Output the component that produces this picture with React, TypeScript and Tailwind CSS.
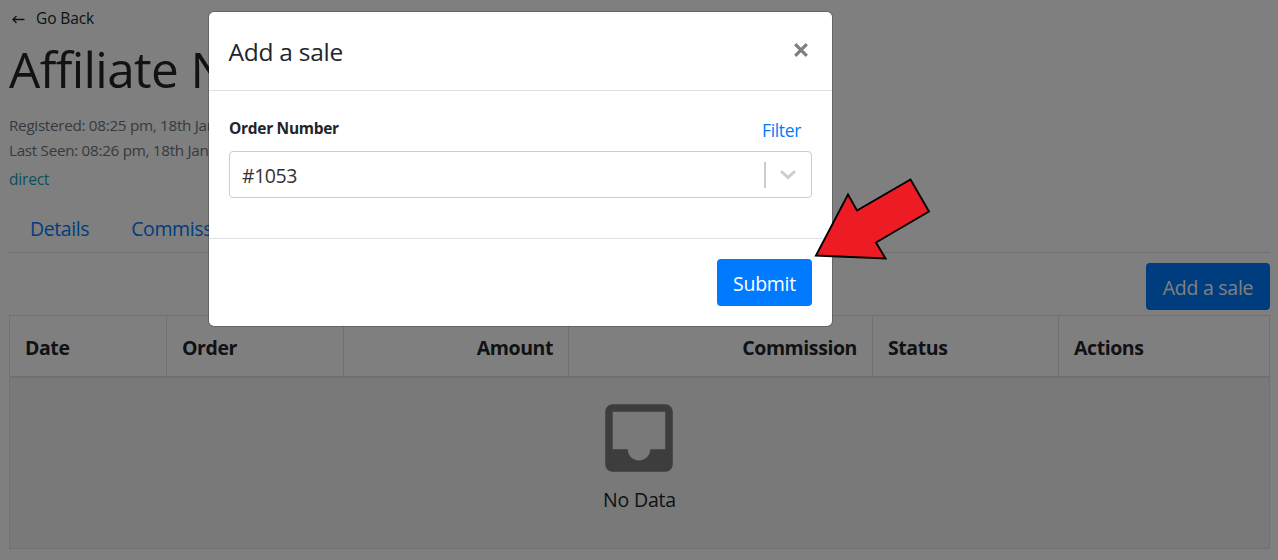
import type { ReactNode } from 'react';

const columns: { label: string; cell: string }[] = [
  { label: 'Date', cell: 'border-r' },
  { label: 'Order', cell: 'border-r' },
  { label: 'Amount', cell: 'border-r justify-end' },
  { label: 'Commission', cell: 'border-r justify-end' },
  { label: 'Status', cell: 'border-r' },
  { label: 'Actions', cell: '' },
];

function BackArrow() {
  return (
    <svg className="h-[9px] w-[13px]" viewBox="0 0 13 9" fill="none" stroke="currentColor" strokeWidth="1.3">
      <path d="M12.5 4.5H1M4.5 1 1 4.5 4.5 8" />
    </svg>
  );
}

function InboxIcon() {
  return (
    <svg className="mr-[2px] h-[90px] w-[90px] text-[#7a7a7a]" viewBox="0 0 24 24" fill="currentColor">
      <path d="M19 3H4.990C3.880 3 3.010 3.890 3.010 5L3 19c0 1.100.880 2 1.990 2H19c1.100 0 2-.900 2-2V5c0-1.110-.900-2-2-2zm0 12h-4c0 1.660-1.350 3-3 3s-3-1.340-3-3H4.990V5H19v10z" />
    </svg>
  );
}

function PrimaryButton({ children, className }: { children: ReactNode; className: string }) {
  return (
    <button className={`flex h-[47px] items-center justify-center rounded bg-[#007bff] pt-[3px] text-[19.5px] tracking-[-0.25px] whitespace-nowrap text-white ${className}`}>
      {children}
    </button>
  );
}

function AffiliatePage() {
  return (
    <main className="h-[560px] overflow-hidden bg-white pr-2 pl-[9px]">
      <a className="flex h-[38px] items-center gap-[11px] pl-[3px] text-[15.5px] tracking-[-0.1px]">
        <BackArrow />
        <span>Go Back</span>
      </a>
      <h1 className="h-[75px] text-[49.5px] leading-[63px] tracking-[-0.65px] whitespace-nowrap">Affiliate Name</h1>
      <div className="h-[53px] text-[15.25px] leading-[25px] tracking-[-0.3px] text-[#6c757d]">
        <p>Registered: 08:25 pm, 18th Jan 2022</p>
        <p>Last Seen: 08:26 pm, 18th Jan 2022</p>
      </div>
      <p className="h-[40px] text-[15.5px] leading-[27px] tracking-[-0.2px] text-[#17a2b8]">direct</p>
      <nav className="flex h-[47px] items-center gap-[42px] border-b border-[#dee2e6] pl-[21px] text-[19.5px] tracking-[-0.4px] text-[#007bff]">
        <a>Details</a>
        <a>Commissions</a>
      </nav>
      <div className="flex h-[62px] justify-end pt-[10px]">
        <PrimaryButton className="w-[124px]">Add a sale</PrimaryButton>
      </div>
      <section className="border border-[#dee2e6]">
        <div className="grid h-[62px] grid-cols-[157px_177px_225px_304px_186px_1fr] border-b-2 border-[#dee2e6]">
          {columns.map((c) => (
            <div key={c.label} className={`flex items-center border-[#dee2e6] px-[15px] pt-[3px] text-[19.5px] font-bold tracking-[-0.42px] ${c.cell}`}>
              <span>{c.label}</span>
            </div>
          ))}
        </div>
        <div className="flex h-[170px] flex-col items-center bg-[#f2f2f2] pt-[15px]">
          <InboxIcon />
          <p className="pt-1 text-[19.5px] leading-[26px] tracking-[-0.2px]">No Data</p>
        </div>
      </section>
    </main>
  );
}

function SaleDialog() {
  return (
    <div role="dialog" className="mt-[11px] ml-[208px] flex h-[316px] w-[625px] flex-col overflow-hidden rounded-md border border-black/20 bg-white bg-clip-padding">
      <header className="flex h-[79px] items-center justify-between border-b border-[#dee2e6] pr-6 pl-[19.5px]">
        <h2 className="pt-[2px] text-[24.5px] tracking-[-0.25px]">Add a sale</h2>
        <button className="mb-[2px] text-[#7f7f7f]" aria-label="Close">
          <svg className="h-[14px] w-[14px]" viewBox="0 0 14 14" fill="none" stroke="currentColor" strokeWidth="3.200">
            <path d="M1.200 1.200 12.800 12.800M12.800 1.200 1.200 12.800" />
          </svg>
        </button>
      </header>
      <div className="h-[147px] px-5 pt-[25px]">
        <div className="flex h-[35px] justify-between pr-[11px]">
          <label className="text-[15.5px] leading-[24px] font-bold tracking-[-0.3px]">Order Number</label>
          <a className="text-[17.5px] leading-[28px] tracking-[-0.35px] text-[#007bff]">Filter</a>
        </div>
        <div className="flex h-[47px] items-center rounded border border-[#ccc] pr-[15px] pl-3">
          <span className="flex-1 pt-[2px] text-[19.5px] tracking-[-0.45px] text-[#333]">#1053</span>
          <span className="mr-[14px] h-[26px] w-[2px] bg-[#ccc]" />
          <svg className="h-[10px] w-[16px] text-[#ccc]" viewBox="0 0 16 10" fill="none" stroke="currentColor" strokeWidth="3" strokeLinecap="round">
            <path d="m2 2 6 5.500L14 2" />
          </svg>
        </div>
      </div>
      <footer className="flex flex-1 justify-end border-t border-[#dee2e6] pt-5 pr-5">
        <PrimaryButton className="w-[95px]">Submit</PrimaryButton>
      </footer>
    </div>
  );
}

export default function App() {
  return (
    <div className="relative h-[560px] w-[1278px] overflow-hidden font-['Open_Sans','Noto_Sans',sans-serif] text-[#212529]">
      <AffiliatePage />
      <div className="absolute inset-0 bg-black/50">
        <SaleDialog />
      </div>
      <svg className="absolute top-[170px] left-[805px] h-[100px] w-[135px]" viewBox="805 170 135 100">
        <path d="M816 255.500 848 194.500 857 210.500 910.500 179.500 929 211.500 876 242.500 885.500 258.500Z" fill="#ed1c24" stroke="#000" strokeWidth="1.900" />
      </svg>
    </div>
  );
}
